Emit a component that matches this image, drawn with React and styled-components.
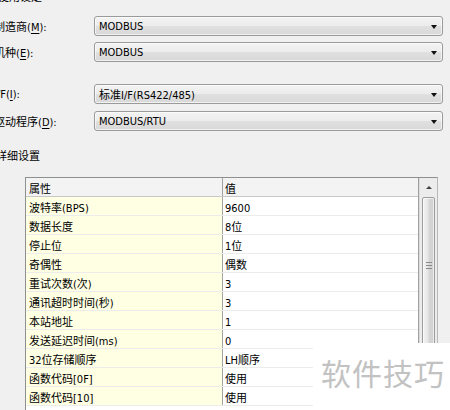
import React from "react";
import styled, { createGlobalStyle } from "styled-components";

const Global = createGlobalStyle`
  html, body { margin: 0; padding: 0; background: #f0f0f0; overflow: hidden; }
  body {
    font-family: "DejaVu Sans Condensed", "DejaVu Sans", "Noto Sans CJK SC", sans-serif;
    font-stretch: condensed;
    font-size: 11px;
    color: #000;
  }
`;

const Page = styled.div`
  position: relative;
  width: 450px;
  height: 410px;
  overflow: hidden;
  background: #f0f0f0;
`;

const Heading = styled.div`
  margin: -9px 0 0 -2px;
  height: 14px;
  line-height: 14px;
`;

const Form = styled.div`
  display: flex;
  flex-direction: column;
  margin-top: 11px;
  margin-left: -6px;
`;

const FieldRow = styled.div`
  display: flex;
  align-items: center;
  height: 20px;
  margin-top: ${(p) => p.$gap || 0}px;
`;

const Label = styled.div`
  width: 100px;
  flex: none;
  white-space: nowrap;
  u { text-decoration: underline; text-underline-offset: 2px; }
`;

const Combo = styled.div`
  box-sizing: border-box;
  width: 349px;
  height: 20px;
  border: 1px solid #9a9a9a;
  border-radius: 3px;
  background: linear-gradient(#f3f3f3 0%, #ececec 50%, #e0e0e0 51%, #d8d8d8 100%);
  box-shadow: inset 0 0 0 1px rgba(255, 255, 255, 0.65);
  display: flex;
  align-items: center;
  padding-left: 4px;
  position: relative;
  white-space: nowrap;
`;

const Arrow = styled.span`
  position: absolute;
  right: 5px;
  top: 8px;
  width: 0;
  height: 0;
  border-left: 3.5px solid transparent;
  border-right: 3.5px solid transparent;
  border-top: 4px solid #111;
`;

const SectionTitle = styled.div`
  margin: 19px 0 0 -4px;
  height: 14px;
  line-height: 14px;
`;

const TableBox = styled.div`
  margin: 13px 0 0 25px;
  width: 413px;
  box-sizing: border-box;
  border: 1px solid #8e8f8f;
  border-right-color: #b8b8b8;
  display: flex;
  background: #fff;
`;

const List = styled.div`
  flex: 1;
  display: flex;
  flex-direction: column;
  border-right: 1px solid #a0a0a0;
`;

const Cols = styled.div`
  display: grid;
  grid-template-columns: 197px 1fr;
  height: 19px;
  box-sizing: border-box;
  border-bottom: 1px solid ${(p) => (p.$head ? "#c8c8c8" : "#ececec")};
  background: ${(p) => (p.$head ? "#f3f3f3" : "transparent")};
`;

const Cell = styled.div`
  padding-left: ${(p) => (p.$prop ? 3 : 2)}px;
  padding-top: 5px;
  line-height: 13px;
  white-space: nowrap;
  overflow: hidden;
  background: ${(p) => (p.$head ? "transparent" : p.$prop ? "#ffffe3" : "#fff")};
  border-right: ${(p) => (p.$prop ? "1px solid #a3a3a3" : "none")};
`;

const ScrollBar = styled.div`
  width: 17px;
  flex: none;
  background: #ececec;
  display: flex;
  flex-direction: column;
  align-items: center;
  border-left: 1px solid #dcdcdc;
`;

const UpButton = styled.div`
  height: 19px;
  width: 100%;
  display: flex;
  align-items: center;
  justify-content: center;
  &::after {
    content: "";
    border-left: 3px solid transparent;
    border-right: 3px solid transparent;
    border-bottom: 3px solid #404040;
  }
`;

const Thumb = styled.div`
  width: 13px;
  height: 220px;
  box-sizing: border-box;
  border: 1px solid #9c9c9c;
  border-radius: 2px;
  background: linear-gradient(90deg, #f4f4f4 0%, #e6e6e6 45%, #d6d6d6 55%, #cfcfcf 100%);
  box-shadow: inset 0 0 0 1px rgba(255, 255, 255, 0.6);
  display: flex;
  justify-content: center;
  padding-top: 64px;
`;

const Grip = styled.div`
  width: 6px;
  height: 7px;
  background: repeating-linear-gradient(#8a8a8a 0 1px, transparent 1px 3px);
`;

const Watermark = styled.div`
  position: absolute;
  left: 313px;
  top: 343px;
  right: 0;
  bottom: 0;
  background: #fff;
  color: #c2c2c2;
  font-family: "Noto Sans CJK SC", sans-serif;
  font-size: 30px;
  line-height: 58px;
  padding-left: 8px;
  letter-spacing: 1px;
`;

const fields = [
  { label: ["制造商(", "M", "):"], value: "MODBUS", gap: 0 },
  { label: ["机种(", "E", "):"], value: "MODBUS", gap: 6 },
  { label: ["I/F(", "I", "):"], value: "标准I/F(RS422/485)", gap: 22 },
  { label: ["驱动程序(", "D", "):"], value: "MODBUS/RTU", gap: 7 },
];

const rows = [
  ["波特率(BPS)", "9600"],
  ["数据长度", "8位"],
  ["停止位", "1位"],
  ["奇偶性", "偶数"],
  ["重试次数(次)", "3"],
  ["通讯超时时间(秒)", "3"],
  ["本站地址", "1"],
  ["发送延迟时间(ms)", "0"],
  ["32位存储顺序", "LH顺序"],
  ["函数代码[0F]", "使用"],
  ["函数代码[10]", "使用"],
];

export default function App() {
  return (
    <Page>
      <Global />
      <Heading>使用设定</Heading>
      <Form>
        {fields.map((f) => (
          <FieldRow key={f.value + f.label[1]} $gap={f.gap}>
            <Label>
              {f.label[0]}
              <u>{f.label[1]}</u>
              {f.label[2]}
            </Label>
            <Combo>
              {f.value}
              <Arrow />
            </Combo>
          </FieldRow>
        ))}
      </Form>
      <SectionTitle>详细设置</SectionTitle>
      <TableBox>
        <List>
          <Cols $head>
            <Cell $prop $head>属性</Cell>
            <Cell $head>值</Cell>
          </Cols>
          {rows.map(([k, v]) => (
            <Cols key={k}>
              <Cell $prop>{k}</Cell>
              <Cell>{v}</Cell>
            </Cols>
          ))}
        </List>
        <ScrollBar>
          <UpButton />
          <Thumb>
            <Grip />
          </Thumb>
        </ScrollBar>
      </TableBox>
      <Watermark>软件技巧</Watermark>
    </Page>
  );
}
